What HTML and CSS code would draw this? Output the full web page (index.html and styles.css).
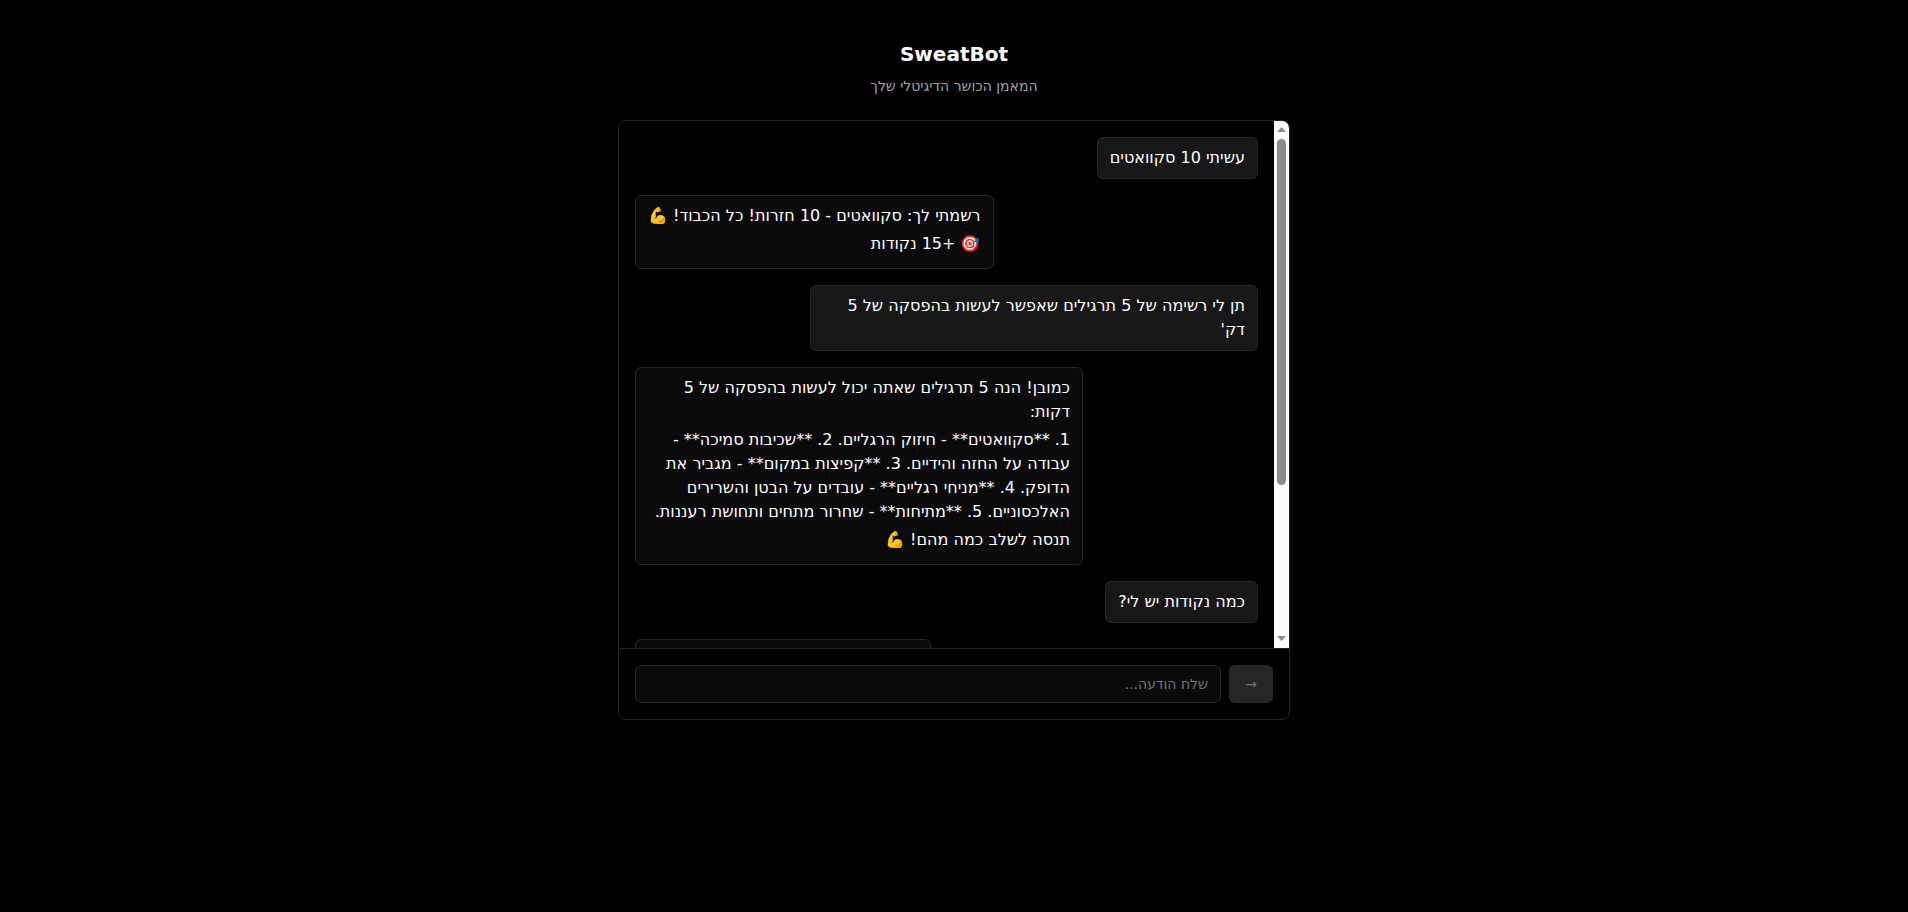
FILE: index.html
```html
<!DOCTYPE html>
<html lang="he">
<head>
<meta charset="utf-8">
<title>SweatBot</title>
<link rel="stylesheet" href="styles.css">
</head>
<body>
<main class="page">
  <header class="header">
    <h1 class="title">SweatBot</h1>
    <p class="subtitle" dir="rtl">המאמן הכושר הדיגיטלי שלך</p>
  </header>
  <section class="chat">
    <div class="viewport">
      <div class="messages">
        <div class="bubble user" dir="rtl">עשיתי 10 סקוואטים</div>
        <div class="bubble bot" dir="rtl">
          <p>רשמתי לך: סקוואטים - 10 חזרות! כל הכבוד! 💪</p>
          <p>🎯 +15 נקודות</p>
        </div>
        <div class="bubble user" dir="rtl">תן לי רשימה של 5 תרגילים שאפשר לעשות בהפסקה של 5 דק'</div>
        <div class="bubble bot" dir="rtl">
          <p>כמובן! הנה 5 תרגילים שאתה יכול לעשות בהפסקה של 5 דקות:</p>
          <p>1. **סקוואטים** - חיזוק הרגליים. 2. **שכיבות סמיכה** - עבודה על החזה והידיים. 3. **קפיצות במקום** - מגביר את הדופק. 4. **מניחי רגליים** - עובדים על הבטן והשרירים האלכסוניים. 5. **מתיחות** - שחרור מתחים ותחושת רעננות.</p>
          <p>תנסה לשלב כמה מהם! 💪</p>
        </div>
        <div class="bubble user" dir="rtl">כמה נקודות יש לי?</div>
        <div class="bubble bot pending" dir="rtl"></div>
      </div>
      <div class="scrollbar" aria-hidden="true">
        <svg class="arrow" viewBox="0 0 15 17"><path d="M7.5 6 12 11H3z"/></svg>
        <div class="track"><div class="thumb"></div></div>
        <svg class="arrow" viewBox="0 0 15 17"><path d="M3 5h9L7.5 10z"/></svg>
      </div>
    </div>
    <form class="composer">
      <input class="field" type="text" dir="rtl" placeholder="שלח הודעה...">
      <button class="send" type="button" disabled>→</button>
    </form>
  </section>
</main>
</body>
</html>
```
FILE: styles.css
```css
* {
  box-sizing: border-box;
}

body {
  margin: 0;
  background: #000;
  color: #fff;
  font-family: "DejaVu Sans", sans-serif;
  font-size: 16px;
  line-height: 24px;
}

.page {
  width: 672px;
  min-height: 912px;
  margin: 0 auto;
  padding-top: 40px;
}

.header {
  margin-bottom: 24px;
  text-align: center;
}

.title {
  margin: 0 0 8px;
  font-size: 20px;
  line-height: 28px;
  font-weight: 700;
}

.subtitle {
  margin: 0;
  color: #a3a3a3;
  font-size: 14px;
  line-height: 20px;
}

.chat {
  display: flex;
  flex-direction: column;
  height: 600px;
  overflow: hidden;
  border: 1px solid #262626;
  border-radius: 8px;
}

.viewport {
  display: flex;
  flex: 1;
  min-height: 0;
}

.messages {
  display: flex;
  flex: 1;
  flex-direction: column;
  gap: 16px;
  padding: 16px;
  overflow: hidden;
}

.bubble {
  flex: none;
  max-width: 448px;
  padding: 8px 12px;
  border: 1px solid #262626;
  border-radius: 6px;
}

.bubble p {
  margin: 0 0 4px;
}

.user {
  align-self: flex-end;
  background: #171717;
}

.bot {
  align-self: flex-start;
  background: #0a0a0a;
}

.pending {
  width: 296px;
  height: 74px;
}

.scrollbar {
  display: flex;
  flex-direction: column;
  width: 15px;
  background: #fcfcfc;
}

.arrow {
  flex: none;
  width: 15px;
  height: 17px;
  fill: #8b8b8b;
}

.track {
  flex: 1;
  padding: 1px 3px;
}

.thumb {
  height: 346px;
  border-radius: 5px;
  background: #8b8b8b;
}

.composer {
  display: flex;
  gap: 8px;
  padding: 16px;
  border-top: 1px solid #262626;
}

.field {
  flex: 1;
  min-width: 0;
  height: 38px;
  padding: 8px 12px;
  border: 1px solid #262626;
  border-radius: 6px;
  background: #0a0a0a;
  color: #fff;
  font: 14px/20px "DejaVu Sans", sans-serif;
}

.field::placeholder {
  color: #737373;
}

.send {
  width: 44px;
  height: 38px;
  padding: 0;
  border: 0;
  border-radius: 6px;
  background: #262626;
  color: #737373;
  font: 14px/20px "DejaVu Sans", sans-serif;
}
```
